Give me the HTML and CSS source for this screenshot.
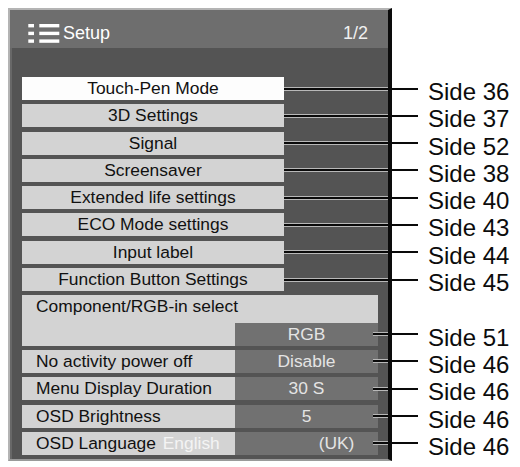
FILE: index.html
```html
<!DOCTYPE html>
<html lang="en">
    <head>
        <meta charset="UTF-8" />
        <title>Setup</title>
        <link rel="stylesheet" href="styles.css">
    </head>
    <body>
        <div id="setupMenu">
            <div class="menuHeader">
                <!-- list glyph: three dots + three bars -->
                <svg class="menuIcon" width="32" height="20" viewBox="0 0 32 20">
                    <rect x="0.3" y="1" width="5.7" height="3.4" fill="#fff" />
                    <rect x="11.3" y="1" width="20" height="3.4" fill="#fff" />
                    <rect x="0.3" y="8.7" width="5.7" height="3.4" fill="#fff" />
                    <rect x="11.3" y="8.7" width="20" height="3.4" fill="#fff" />
                    <rect x="0.3" y="16.4" width="5.7" height="3.4" fill="#fff" />
                    <rect x="11.3" y="16.4" width="20" height="3.4" fill="#fff" />
                </svg>
                <span class="menuTitle">Setup</span>
                <span class="menuPage">1/2</span>
            </div>
            <div class="menuBody">
                <div class="item">
                    <div class="cell selected">Touch-Pen Mode</div>
                    <span class="lead"></span>
                    <span class="ref">Side 36</span>
                </div>
                <div class="item">
                    <div class="cell">3D Settings</div>
                    <span class="lead"></span>
                    <span class="ref">Side 37</span>
                </div>
                <div class="item">
                    <div class="cell">Signal</div>
                    <span class="lead"></span>
                    <span class="ref">Side 52</span>
                </div>
                <div class="item">
                    <div class="cell">Screensaver</div>
                    <span class="lead"></span>
                    <span class="ref">Side 38</span>
                </div>
                <div class="item">
                    <div class="cell">Extended life settings</div>
                    <span class="lead"></span>
                    <span class="ref">Side 40</span>
                </div>
                <div class="item">
                    <div class="cell">ECO Mode settings</div>
                    <span class="lead"></span>
                    <span class="ref">Side 43</span>
                </div>
                <div class="item">
                    <div class="cell">Input label</div>
                    <span class="lead"></span>
                    <span class="ref">Side 44</span>
                </div>
                <div class="item">
                    <div class="cell">Function Button Settings</div>
                    <span class="lead"></span>
                    <span class="ref">Side 45</span>
                </div>

                <!-- settings with a value column -->
                <div class="group">
                    <div class="groupTitle">Component/RGB-in select</div>
                    <div class="item">
                        <div class="name"></div>
                        <div class="value">RGB</div>
                        <span class="lead short"></span>
                        <span class="ref">Side 51</span>
                    </div>
                </div>
                <div class="item">
                    <div class="name">No activity power off</div>
                    <div class="value">Disable</div>
                    <span class="lead short"></span>
                    <span class="ref">Side 46</span>
                </div>
                <div class="item">
                    <div class="name">Menu Display Duration</div>
                    <div class="value">30 S</div>
                    <span class="lead short"></span>
                    <span class="ref">Side 46</span>
                </div>
                <div class="item">
                    <div class="name">OSD Brightness</div>
                    <div class="value">5</div>
                    <span class="lead short"></span>
                    <span class="ref">Side 46</span>
                </div>
                <div class="item">
                    <div class="name">OSD Language <span class="ghost">English</span></div>
                    <div class="value shifted">(UK)</div>
                    <span class="lead short"></span>
                    <span class="ref">Side 46</span>
                </div>
            </div>
        </div>
    </body>
</html>
```

FILE: styles.css
```css
* {
    margin: 0;
    padding: 0;
    box-sizing: border-box;
}
html,
body {
    width: 100%;
    height: 100%;
    background-color: white;
}
body {
    font-family: "Liberation Sans", Arial, sans-serif;
    padding: 8px 0 0 8px;
    overflow: hidden;
}
#setupMenu {
    width: 384px;
    background-color: #545454;
    border-top: 2px solid #b4b4b4;
    border-left: 2px solid #b4b4b4;
    border-right: 4px solid #0c0c0c;
    border-bottom: 2px solid #9a9a9a;
}
.menuHeader {
    display: flex;
    align-items: center;
    height: 38px;
    padding: 8px 20px 0 18px;
    background-color: #6e6e6e;
    color: white;
    font-size: 18px;
    & .menuTitle {
        margin-left: 3px;
    }
    & .menuPage {
        margin-left: auto;
        color: #f0f0f0;
    }
}
.menuBody {
    display: flex;
    flex-direction: column;
    gap: 4.3px;
    padding: 29px 0 4px 12px;
    box-shadow: inset 2px 0 #686868;
}
.item {
    display: flex;
    align-items: center;
    width: 496px;
    height: 23px;
    font-size: 17.4px;
    line-height: 23px;
    color: #111;
}
.cell {
    width: 262px;
    height: 23px;
    background-color: #d3d3d3;
    text-align: center;
    white-space: nowrap;
}
.cell.selected {
    background-color: #fdfdfd;
}
.name {
    width: 213px;
    height: 23px;
    padding-left: 14px;
    background-color: #d3d3d3;
    white-space: nowrap;
}
.ghost {
    color: #f4f4f4;
    margin-left: 2px;
}
.value {
    width: 143px;
    height: 23px;
    background-color: #717171;
    color: #e4e4e4;
    text-align: center;
}
.value.shifted {
    padding-left: 60px;
}
.group {
    display: flex;
    flex-direction: column;
    & .groupTitle {
        width: 356px;
        height: 27.3px;
        padding-left: 14px;
        background-color: #d3d3d3;
        font-size: 17.4px;
        line-height: 23px;
        color: #111;
    }
}
/* leader line: black stroke with a light rim while over the panel */
.lead {
    --rim: 104px;
    flex: 0 0 auto;
    width: 134px;
    height: 5px;
    background:
        linear-gradient(#0a0a0a, #0a0a0a) center / 100% 2px no-repeat,
        linear-gradient(#b8b8b8, #b8b8b8) left center / var(--rim) 4px no-repeat;
}
.lead.short {
    --rim: 15px;
    width: 45px;
    margin-left: -5px;
}
.ref {
    margin: 6px 0 0 10px;
    font-size: 24px;
    line-height: 23px;
    color: #0c0c0c;
    white-space: nowrap;
}
```
